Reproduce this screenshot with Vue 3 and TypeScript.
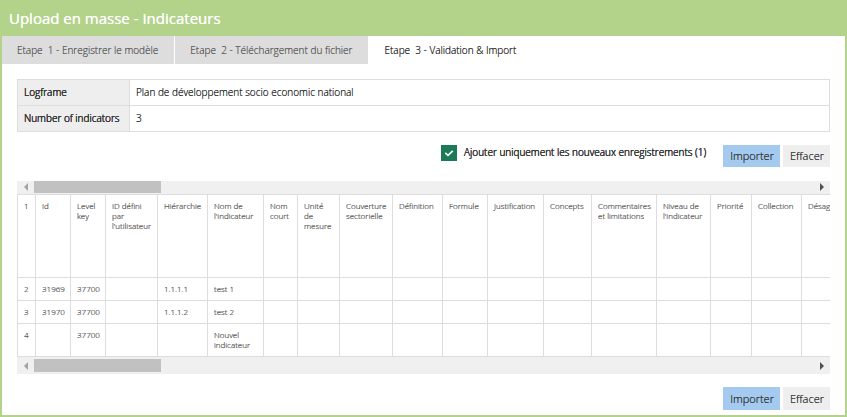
<script setup lang="ts">
import { ref } from 'vue'

interface Column {
  label: string
  width: number
}

const steps: string[] = [
  'Etape \u00a01 - Enregistrer le modèle',
  'Etape \u00a02 - Téléchargement du fichier',
  'Etape \u00a03 - Validation & Import',
]
const activeStep = ref(2)
const onlyNew = ref(true)
const viewport = ref<HTMLElement | null>(null)

const columns: Column[] = [
  { label: 'Id', width: 35 },
  { label: 'Level key', width: 35 },
  { label: "ID défini par l'utilisateur", width: 52 },
  { label: 'Hiérarchie', width: 50 },
  { label: "Nom de l'indicateur", width: 56 },
  { label: 'Nom court', width: 34 },
  { label: 'Unité de mesure', width: 42 },
  { label: 'Couverture sectorielle', width: 53 },
  { label: 'Définition', width: 50 },
  { label: 'Formule', width: 45 },
  { label: 'Justification', width: 56 },
  { label: 'Concepts', width: 48 },
  { label: 'Commentaires et limitations', width: 65 },
  { label: "Niveau de l'indicateur", width: 54 },
  { label: 'Priorité', width: 41 },
  { label: 'Collection', width: 50 },
  { label: 'Désagrégation', width: 72 },
]

const rows: string[][] = [
  ['31969', '37700', '', '1.1.1.1', 'test 1'],
  ['31970', '37700', '', '1.1.1.2', 'test 2'],
  ['', '37700', '', '', 'Nouvel indicateur'],
]

const tableWidth = columns.reduce((sum, c) => sum + c.width, 19)

function scrollSheet(delta: number): void {
  viewport.value?.scrollBy({ left: delta })
}
</script>

<template>
  <main class="panel">
    <h1 class="title">Upload en masse - Indicateurs</h1>

    <nav class="tabs">
      <button
        v-for="(step, i) in steps"
        :key="step"
        type="button"
        class="tab"
        :class="{ active: i === activeStep }"
        @click="activeStep = i"
      >{{ step }}</button>
    </nav>

    <div class="content">
      <table class="summary">
        <tbody>
          <tr>
            <th scope="row">Logframe</th>
            <td>Plan de développement socio economic national</td>
          </tr>
          <tr>
            <th scope="row">Number of indicators</th>
            <td>3</td>
          </tr>
        </tbody>
      </table>

      <div class="actions">
        <label class="option">
          <input v-model="onlyNew" type="checkbox" class="check-input" />
          <span class="box">
            <svg v-if="onlyNew" viewBox="0 0 16 16" width="16" height="16" aria-hidden="true">
              <path d="M4.3 7.8 7 10.4 11.8 5.8" fill="none" stroke="#fff" stroke-width="1.7" />
            </svg>
          </span>
          <span class="option-text">Ajouter uniquement les nouveaux enregistrements (1)</span>
        </label>
        <div class="buttons">
          <button type="button" class="btn primary">Importer</button>
          <button type="button" class="btn">Effacer</button>
        </div>
      </div>

      <div class="scrollbar top">
        <button type="button" class="arrow" aria-label="Défiler à gauche" @click="scrollSheet(-60)">
          <svg viewBox="0 0 4 8" width="4" height="8"><path d="M4 0v8L0 4z" fill="#a3a3a3" /></svg>
        </button>
        <div class="track"><div class="thumb"></div></div>
        <button type="button" class="arrow" aria-label="Défiler à droite" @click="scrollSheet(60)">
          <svg viewBox="0 0 4 8" width="4" height="8"><path d="M0 0v8l4-4z" fill="#505050" /></svg>
        </button>
      </div>

      <div ref="viewport" class="viewport">
        <table class="sheet" :style="{ width: tableWidth + 'px' }">
          <colgroup>
            <col class="index" />
            <col v-for="c in columns" :key="c.label" :style="{ width: c.width + 'px' }" />
          </colgroup>
          <thead>
            <tr>
              <th>1</th>
              <th v-for="c in columns" :key="c.label" scope="col">{{ c.label }}</th>
            </tr>
          </thead>
          <tbody>
            <tr v-for="(row, r) in rows" :key="r">
              <td>{{ r + 2 }}</td>
              <td v-for="(c, i) in columns" :key="c.label">{{ row[i] ?? '' }}</td>
            </tr>
          </tbody>
        </table>
      </div>

      <div class="scrollbar bottom">
        <button type="button" class="arrow" aria-label="Défiler à gauche" @click="scrollSheet(-60)">
          <svg viewBox="0 0 4 8" width="4" height="8"><path d="M4 0v8L0 4z" fill="#a3a3a3" /></svg>
        </button>
        <div class="track"><div class="thumb"></div></div>
        <button type="button" class="arrow" aria-label="Défiler à droite" @click="scrollSheet(60)">
          <svg viewBox="0 0 4 8" width="4" height="8"><path d="M0 0v8l4-4z" fill="#505050" /></svg>
        </button>
      </div>

      <div class="buttons footer">
        <button type="button" class="btn primary">Importer</button>
        <button type="button" class="btn">Effacer</button>
      </div>
    </div>
  </main>
</template>

<style>
body {
  margin: 0;
  background: #fff;
}
</style>

<style scoped>
.panel {
  box-sizing: border-box;
  border: 2px solid #b2d389;
  border-top: 0;
  font-family: 'Open Sans', sans-serif;
  font-size: 10px;
  font-weight: 300;
  line-height: 16px;
  color: #2b2b2b;
  text-shadow: 0 0 currentColor;
}

button {
  margin: 0;
  border: 0;
  border-radius: 0;
  font-family: inherit;
  font-weight: inherit;
  text-shadow: 0 0 currentColor;
  cursor: pointer;
}

.title {
  margin: 0;
  padding: 8px 7px;
  background: #b2d389;
  color: #fff;
  font-size: 15px;
  font-weight: 400;
  line-height: 20px;
  text-shadow: 0 0 #fff;
}

.tabs {
  display: flex;
  gap: 1px;
}

.tab {
  padding: 6px 16px 6px 15px;
  background: #ddd;
  color: #5c5c5c;
  font-size: 10px;
  line-height: 16px;
  white-space: nowrap;
}

.tab.active {
  background: #fff;
  color: #2b2b2b;
}

.content {
  padding: 15px 15px 5px;
}

.summary {
  width: 100%;
  border-collapse: separate;
  border-spacing: 0;
  border-top: 1px solid #ddd;
  border-left: 1px solid #ddd;
}

.summary th,
.summary td {
  padding: 4px 6px 5px;
  border-right: 1px solid #ddd;
  border-bottom: 1px solid #ddd;
  text-align: left;
}

.summary th {
  box-sizing: border-box;
  width: 112px;
  background: #eee;
  color: #3a3a3a;
  font-weight: 300;
  text-shadow: 0 0 currentColor, 0 0 currentColor, 0 0 currentColor;
  white-space: nowrap;
}

.actions {
  display: flex;
  justify-content: flex-end;
  align-items: flex-start;
  gap: 17px;
  margin: 13px 0 14px;
}

.option {
  display: flex;
  align-items: flex-start;
  gap: 7px;
  cursor: pointer;
}

.check-input {
  position: absolute;
  width: 16px;
  height: 16px;
  margin: 0;
  opacity: 0;
}

.box {
  width: 16px;
  height: 16px;
  background: #1b7b57;
}

.box svg {
  display: block;
}

.option-text {
  color: #3a3a3a;
  line-height: 14px;
  text-shadow: 0 0 currentColor, 0 0 currentColor, 0 0 currentColor;
}

.buttons {
  display: flex;
  justify-content: flex-end;
  gap: 3px;
}

.btn {
  padding: 2px 6px 2px 7px;
  background: #eee;
  color: #333;
  font-size: 11px;
  line-height: 18px;
}

.btn.primary {
  background: #a4caef;
}

.scrollbar {
  display: flex;
  align-items: stretch;
  background: #f0f0f0;
}

.scrollbar.top {
  box-sizing: border-box;
  height: 13px;
  padding-bottom: 1px;
}

.scrollbar.bottom {
  box-sizing: border-box;
  height: 17px;
  padding: 2px 0;
}

.arrow {
  display: flex;
  align-items: center;
  justify-content: center;
  width: 17px;
  padding: 0;
  background: transparent;
}

.track {
  flex: 1;
}

.thumb {
  width: 127px;
  height: 100%;
  background: #c1c1c1;
}

.viewport {
  overflow: hidden;
}

.sheet {
  table-layout: fixed;
  border-collapse: separate;
  border-spacing: 0;
  border-top: 1px solid #ddd;
  border-left: 1px solid #ddd;
  color: #555;
  font-size: 8px;
  line-height: 10px;
}

.index {
  width: 18px;
}

.sheet th,
.sheet td {
  height: 10px;
  padding: 6px;
  border-right: 1px solid #ddd;
  border-bottom: 1px solid #ddd;
  font-weight: 300;
  text-align: left;
  vertical-align: top;
}

.sheet th {
  height: 70px;
}

.footer {
  margin-top: 13px;
}

.footer .btn {
  line-height: 19px;
}
</style>
